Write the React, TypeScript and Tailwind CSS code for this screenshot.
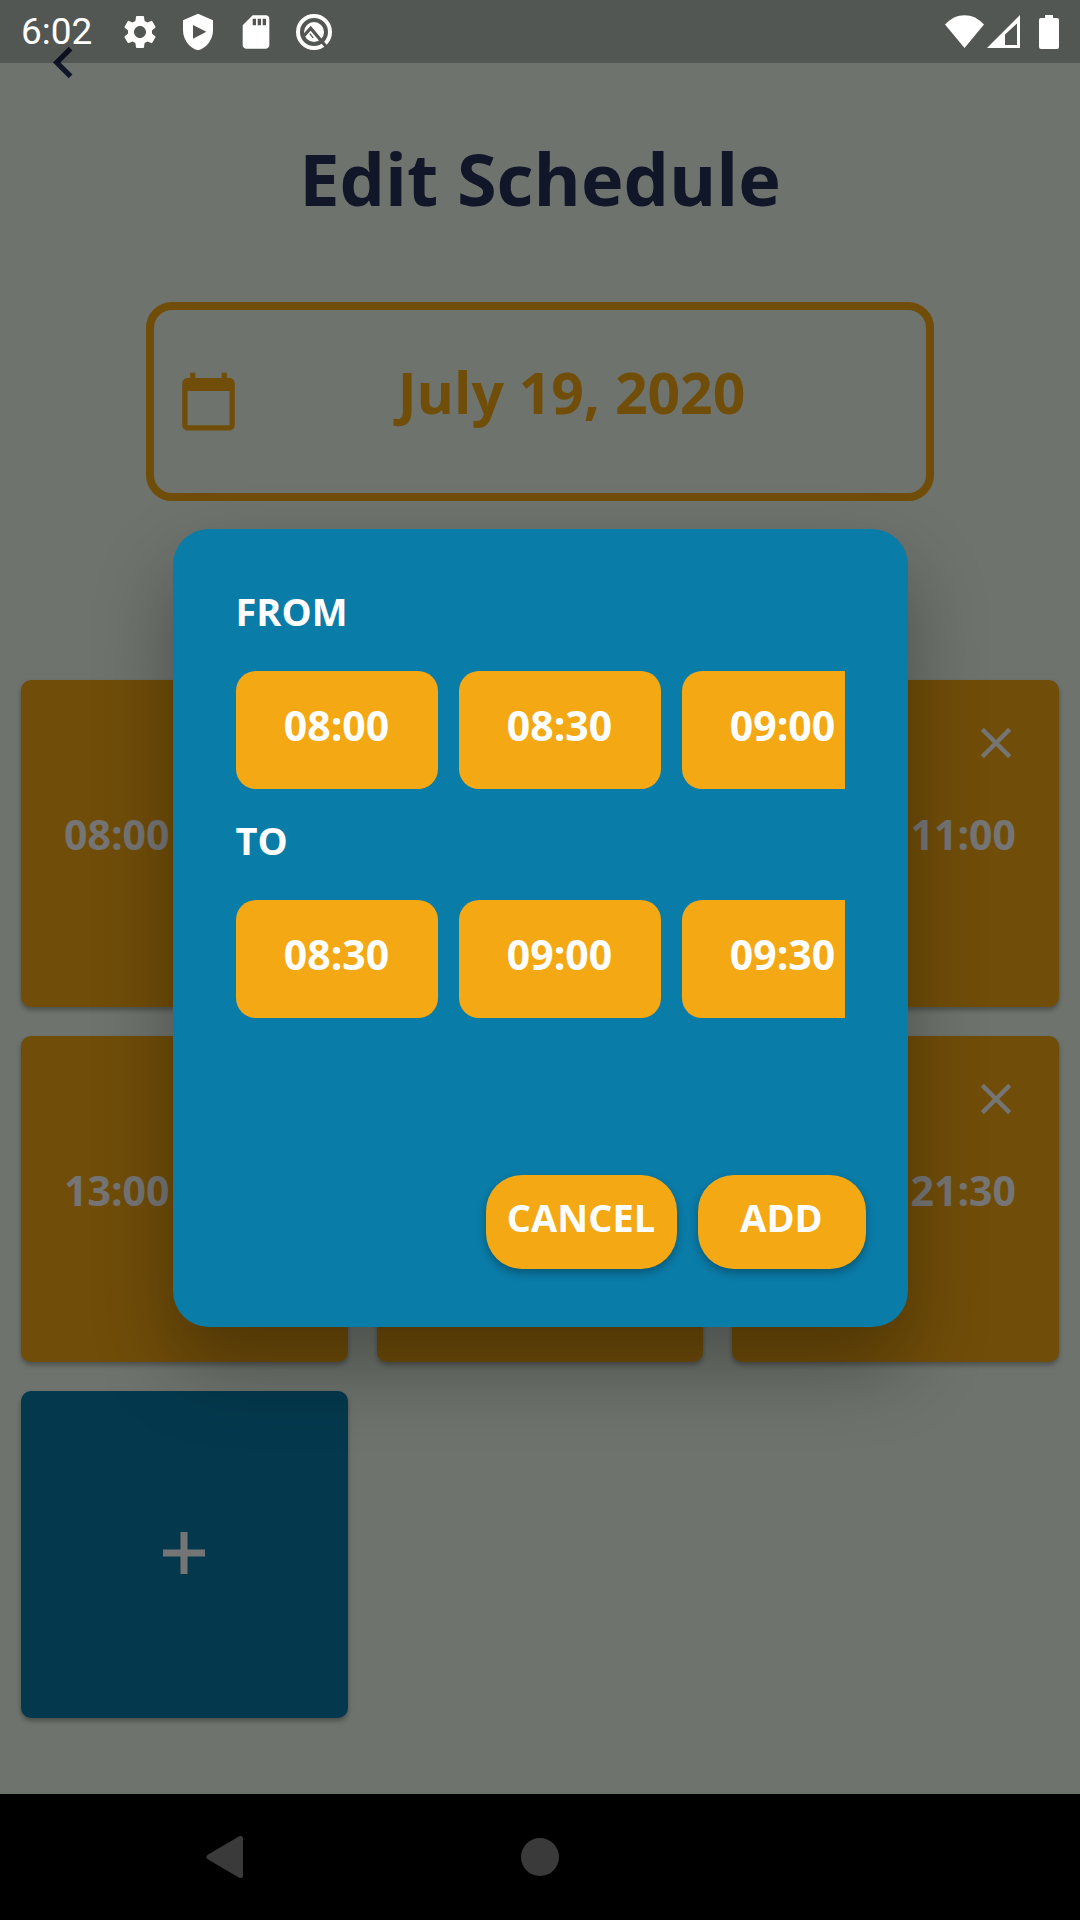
import { MdCalendarToday, MdChevronLeft, MdClose, MdSdCard, MdSettings } from "react-icons/md";

const FROM_TIMES = ["08:00", "08:30", "09:00"];
const TO_TIMES = ["08:30", "09:00", "09:30"];

type Slot = { start?: string; end?: string };

const SLOTS: Slot[] = [
  { start: "08:00" },
  {},
  { end: "11:00" },
  { start: "13:00" },
  {},
  { end: "21:30" },
];

function ShieldPlay() {
  return (
    <svg viewBox="0 0 24 24" className="size-10" fill="currentColor" aria-hidden="true">
      <path
        fillRule="evenodd"
        d="M12 1 3 5v6c0 5.55 3.84 10.74 9 12 5.16-1.26 9-6.45 9-12V5zM9 7.8v8.2l8-4.1z"
      />
    </svg>
  );
}

function CircleQ() {
  return (
    <svg viewBox="0 0 48 48" className="size-10" fill="none" aria-hidden="true">
      <circle cx="24" cy="24" r="19.2" stroke="currentColor" strokeWidth="4.8" />
      <circle cx="24" cy="24" r="12" fill="currentColor" />
      <path d="M10.500 30 20 19.500 39 42" stroke="#545652" strokeWidth="4" />
      <path d="m19 26 4 5" stroke="#545652" strokeWidth="1.5" />
    </svg>
  );
}

function StatusBar() {
  return (
    <header className="absolute inset-x-0 top-0 flex h-[63px] items-center justify-between bg-black/24 px-[21px] text-white">
      <div className="flex items-center gap-[18px]">
        <span className="mr-2.5 font-['Roboto',sans-serif] text-[37px] leading-[44px]">6:02</span>
        <MdSettings className="size-10" />
        <ShieldPlay />
        <MdSdCard className="size-10" />
        <CircleQ />
      </div>
      <div className="flex items-center">
        <svg viewBox="0 0 39 34" className="h-[34px] w-[39px]" fill="currentColor" aria-hidden="true">
          <path d="M0 9.500C11-3 28-3 39 9.500L19.500 33z" />
        </svg>
        <svg viewBox="0 0 33 34" className="ml-[3px] h-[34px] w-[33px]" fill="currentColor" aria-hidden="true">
          <path fillRule="evenodd" d="M33 0v33H0zM30 8.500 18 19.500V30h12z" />
        </svg>
        <svg viewBox="0 0 20 34" className="ml-[19px] h-[34px] w-5" fill="currentColor" aria-hidden="true">
          <path d="M6 0h8v3h4a2 2 0 0 1 2 2v27a2 2 0 0 1-2 2H2a2 2 0 0 1-2-2V5a2 2 0 0 1 2-2h4z" />
        </svg>
      </div>
    </header>
  );
}

function SlotCard({ start, end }: Slot) {
  return (
    <li className="relative flex aspect-square items-center justify-between rounded-[10px] bg-[#f4a814] px-[43px] pb-[18px] text-[41px] leading-10 font-bold text-white shadow-[0_3px_5px_rgba(0,0,0,0.3)]">
      <span>{start}</span>
      <span>{end}</span>
      <button type="button" aria-label="Remove slot" className="absolute top-[37px] right-[37px]">
        <MdClose className="size-[52px]" />
      </button>
    </li>
  );
}

function TimePicker({ label, times }: { label: string; times: string[] }) {
  return (
    <section>
      <h2 className="mb-10 text-[38px] leading-10 font-bold">{label}</h2>
      <div className="flex gap-[21px] overflow-hidden">
        {times.map((time) => (
          <button
            key={time}
            type="button"
            className="flex h-[118px] w-[202px] shrink-0 items-center justify-center rounded-[20px] bg-[#f4a814] pb-2.5 text-[41px] leading-10 font-bold"
          >
            {time}
          </button>
        ))}
      </div>
    </section>
  );
}

export default function App() {
  return (
    <div className="relative flex min-h-screen flex-col bg-[#effaed] font-['Open_Sans',sans-serif]">
      <main className="flex-1">
        <button type="button" aria-label="Back" className="mt-[31px] ml-8 block text-[#293059]">
          <MdChevronLeft className="size-[63px]" />
        </button>
        <h1 className="mt-10 text-center text-[72px] leading-[88px] font-bold text-[#293059]">Edit Schedule</h1>
        <button
          type="button"
          className="mx-auto mt-20 flex h-[199px] w-[73%] items-center rounded-[26px] border-8 border-[#f4a814] px-[23px] text-[#f4a814]"
        >
          <MdCalendarToday className="size-[63px] shrink-0" />
          <span className="flex-1 pb-5 text-center text-[57px] leading-[56px] font-bold">July 19, 2020</span>
        </button>
        <ul className="mt-[179px] grid grid-cols-3 gap-[29px] px-[21px]">
          {SLOTS.map((slot, index) => (
            <SlotCard key={index} {...slot} />
          ))}
          <li>
            <button
              type="button"
              aria-label="Add slot"
              className="flex aspect-square w-full items-center justify-center rounded-[10px] bg-[#0a7ca8] pb-1 text-white shadow-[0_3px_5px_rgba(0,0,0,0.3)]"
            >
              <svg viewBox="0 0 42 42" className="size-[42px]" fill="none" stroke="currentColor" strokeWidth="7" aria-hidden="true">
                <path d="M21 0v42M0 21h42" />
              </svg>
            </button>
          </li>
        </ul>
      </main>

      <div className="absolute inset-0 flex items-center justify-center bg-black/54 pt-[63px] pb-[127px]">
        <div
          role="dialog"
          aria-modal="true"
          aria-label="Add time slot"
          className="flex w-[735px] flex-col rounded-[36px] bg-[#0a7ca8] pt-[62px] pb-[58px] text-white shadow-[0_40px_80px_rgba(0,0,0,0.3)]"
        >
          <div className="flex flex-col gap-[31px] px-[63px]">
            <TimePicker label="FROM" times={FROM_TIMES} />
            <TimePicker label="TO" times={TO_TIMES} />
          </div>
          <div className="mt-[157px] flex justify-end gap-[21px] pr-[42px] text-[38px] leading-10 font-bold">
            <button
              type="button"
              className="flex h-[94px] min-w-[191px] items-center justify-center rounded-[36px] bg-[#f4a814] pb-2.5 shadow-[0_4px_8px_rgba(0,0,0,0.3)]"
            >
              CANCEL
            </button>
            <button
              type="button"
              className="flex h-[94px] min-w-[168px] items-center justify-center rounded-[36px] bg-[#f4a814] pb-2.5 shadow-[0_4px_8px_rgba(0,0,0,0.3)]"
            >
              ADD
            </button>
          </div>
        </div>
      </div>

      <StatusBar />

      <nav className="relative grid h-[126px] grid-cols-[5fr_2fr_5fr] items-center bg-black text-[#3a3a3a]">
        <button type="button" aria-label="System back" className="justify-self-center">
          <svg viewBox="0 0 38 42" className="h-[42px] w-[38px]" fill="currentColor" stroke="currentColor" strokeWidth="5" strokeLinejoin="round" aria-hidden="true">
            <path d="M34.500 2.500v37L3 21z" />
          </svg>
        </button>
        <button type="button" aria-label="Home" className="size-[38px] justify-self-center rounded-full bg-[#3a3a3a]" />
      </nav>
    </div>
  );
}
